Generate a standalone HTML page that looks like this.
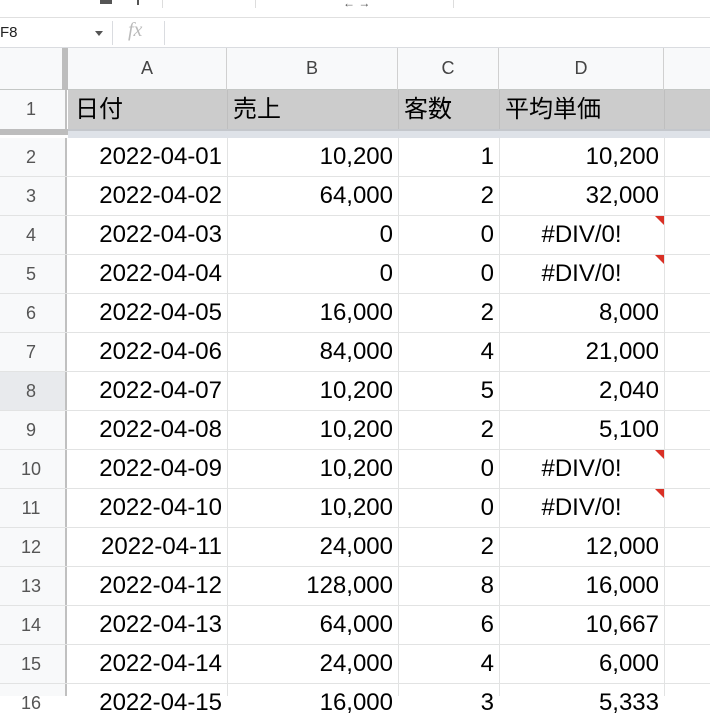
<!DOCTYPE html>
<html><head><meta charset="utf-8"><style>
*{margin:0;padding:0;box-sizing:border-box}
body{width:710px;height:696px;overflow:hidden;background:#fff;font-family:"Liberation Sans","Noto Sans CJK JP",sans-serif;position:relative}
.a{position:absolute}
.hl{position:absolute;background:#e2e3e3}
.c{position:absolute;height:39px;line-height:38px;font-size:24px;color:#000;white-space:nowrap}
.r{text-align:right;padding-right:5px}
.rh{position:absolute;left:0;width:62px;height:39px;line-height:38px;text-align:center;font-size:18px;color:#555}
.ch{position:absolute;top:48px;height:42px;line-height:40px;text-align:center;font-size:18px;color:#444;border-right:1px solid #d0d0d0}
.tri{position:absolute;width:0;height:0;border-top:9px solid #d93025;border-left:9px solid transparent}
</style></head><body>
<div class="a" style="left:0;top:0;width:710px;height:18px;background:#fff;border-bottom:1px solid #e0e0e0"></div>
<div class="a" style="left:100px;top:0;width:12px;height:4px;background:#555"></div>
<div class="a" style="left:137px;top:0;width:2px;height:5px;background:#555"></div>
<div class="a" style="left:162px;top:0;width:1px;height:8px;background:#ddd"></div>
<div class="a" style="left:255px;top:0;width:1px;height:8px;background:#ddd"></div>
<div class="a" style="left:343px;top:-4px;font-size:12px;color:#555">← →</div>
<div class="a" style="left:453px;top:0;width:1px;height:8px;background:#ddd"></div>
<div class="a" style="left:0;top:19px;width:710px;height:29px;border-bottom:1px solid #dadce0"></div>
<div class="a" style="left:0;top:24px;font-size:15px;color:#222">F8</div>
<div class="a" style="left:95px;top:31px;border-top:5px solid #555;border-left:4px solid transparent;border-right:4px solid transparent"></div>
<div class="a" style="left:112px;top:21px;width:1px;height:24px;background:#dadce0"></div>
<div class="a" style="left:128px;top:19px;font-size:20px;font-style:italic;color:#bbb;font-family:'Liberation Serif',serif">fx</div>
<div class="a" style="left:164px;top:21px;width:1px;height:24px;background:#dadce0"></div>
<div class="a" style="left:0;top:48px;width:710px;height:42px;background:#f8f9fa;border-bottom:1px solid #c4c7c5"></div>
<div class="a" style="left:62px;top:48px;width:6px;height:42px;background:#bdbdbd"></div>
<div class="ch" style="left:68px;width:159px">A</div>
<div class="ch" style="left:227px;width:171px">B</div>
<div class="ch" style="left:398px;width:101px">C</div>
<div class="ch" style="left:499px;width:165px">D</div>
<div class="a" style="left:0;top:90px;width:67px;height:39px;background:#f8f9fa;border-right:2px solid #c0c0c0"></div>
<div class="rh" style="top:90px">1</div>
<div class="a" style="left:68px;top:90px;width:642px;height:39px;background:#cccccc"></div>
<div class="a" style="left:227px;top:90px;width:1px;height:39px;background:#bfbfbf"></div>
<div class="a" style="left:398px;top:90px;width:1px;height:39px;background:#bfbfbf"></div>
<div class="a" style="left:499px;top:90px;width:1px;height:39px;background:#bfbfbf"></div>
<div class="a" style="left:664px;top:90px;width:1px;height:39px;background:#bfbfbf"></div>
<div class="c" style="left:75px;top:91px">日付</div>
<div class="c" style="left:233px;top:91px">売上</div>
<div class="c" style="left:404px;top:91px">客数</div>
<div class="c" style="left:505px;top:91px">平均単価</div>
<div class="a" style="left:0;top:129px;width:68px;height:6px;background:#bdbdbd"></div>
<div class="a" style="left:68px;top:129px;width:642px;height:9px;background:#dee2e8;border-top:2px solid #c4c7cc"></div>
<div class="a" style="left:0;top:138px;width:67px;height:558px;background:#f8f9fa;border-right:2px solid #c0c0c0"></div>
<div class="a" style="left:0;top:372px;width:67px;height:39px;background:#e8eaed;border-right:2px solid #c0c0c0"></div>
<div class="a" style="left:227px;top:138px;width:1px;height:558px;background:#e2e3e3"></div>
<div class="a" style="left:398px;top:138px;width:1px;height:558px;background:#e2e3e3"></div>
<div class="a" style="left:499px;top:138px;width:1px;height:558px;background:#e2e3e3"></div>
<div class="a" style="left:664px;top:138px;width:1px;height:558px;background:#e2e3e3"></div>
<div class="hl" style="left:0;top:176px;width:710px;height:1px"></div>
<div class="hl" style="left:0;top:215px;width:710px;height:1px"></div>
<div class="hl" style="left:0;top:254px;width:710px;height:1px"></div>
<div class="hl" style="left:0;top:293px;width:710px;height:1px"></div>
<div class="hl" style="left:0;top:332px;width:710px;height:1px"></div>
<div class="hl" style="left:0;top:371px;width:710px;height:1px"></div>
<div class="hl" style="left:0;top:410px;width:710px;height:1px"></div>
<div class="hl" style="left:0;top:449px;width:710px;height:1px"></div>
<div class="hl" style="left:0;top:488px;width:710px;height:1px"></div>
<div class="hl" style="left:0;top:527px;width:710px;height:1px"></div>
<div class="hl" style="left:0;top:566px;width:710px;height:1px"></div>
<div class="hl" style="left:0;top:605px;width:710px;height:1px"></div>
<div class="hl" style="left:0;top:644px;width:710px;height:1px"></div>
<div class="hl" style="left:0;top:683px;width:710px;height:1px"></div>

<div class="rh" style="top:138px">2</div><div class="c r" style="left:68px;width:159px;top:138px">2022-04-01</div><div class="c r" style="left:227px;width:171px;top:138px">10,200</div><div class="c r" style="left:398px;width:101px;top:138px">1</div><div class="c r" style="left:499px;width:165px;top:138px">10,200</div>
<div class="rh" style="top:177px">3</div><div class="c r" style="left:68px;width:159px;top:177px">2022-04-02</div><div class="c r" style="left:227px;width:171px;top:177px">64,000</div><div class="c r" style="left:398px;width:101px;top:177px">2</div><div class="c r" style="left:499px;width:165px;top:177px">32,000</div>
<div class="rh" style="top:216px">4</div><div class="c r" style="left:68px;width:159px;top:216px">2022-04-03</div><div class="c r" style="left:227px;width:171px;top:216px">0</div><div class="c r" style="left:398px;width:101px;top:216px">0</div><div class="c" style="left:499px;width:165px;top:216px;text-align:center">#DIV/0!</div><div class="tri" style="left:655px;top:216px"></div>
<div class="rh" style="top:255px">5</div><div class="c r" style="left:68px;width:159px;top:255px">2022-04-04</div><div class="c r" style="left:227px;width:171px;top:255px">0</div><div class="c r" style="left:398px;width:101px;top:255px">0</div><div class="c" style="left:499px;width:165px;top:255px;text-align:center">#DIV/0!</div><div class="tri" style="left:655px;top:255px"></div>
<div class="rh" style="top:294px">6</div><div class="c r" style="left:68px;width:159px;top:294px">2022-04-05</div><div class="c r" style="left:227px;width:171px;top:294px">16,000</div><div class="c r" style="left:398px;width:101px;top:294px">2</div><div class="c r" style="left:499px;width:165px;top:294px">8,000</div>
<div class="rh" style="top:333px">7</div><div class="c r" style="left:68px;width:159px;top:333px">2022-04-06</div><div class="c r" style="left:227px;width:171px;top:333px">84,000</div><div class="c r" style="left:398px;width:101px;top:333px">4</div><div class="c r" style="left:499px;width:165px;top:333px">21,000</div>
<div class="rh" style="top:372px">8</div><div class="c r" style="left:68px;width:159px;top:372px">2022-04-07</div><div class="c r" style="left:227px;width:171px;top:372px">10,200</div><div class="c r" style="left:398px;width:101px;top:372px">5</div><div class="c r" style="left:499px;width:165px;top:372px">2,040</div>
<div class="rh" style="top:411px">9</div><div class="c r" style="left:68px;width:159px;top:411px">2022-04-08</div><div class="c r" style="left:227px;width:171px;top:411px">10,200</div><div class="c r" style="left:398px;width:101px;top:411px">2</div><div class="c r" style="left:499px;width:165px;top:411px">5,100</div>
<div class="rh" style="top:450px">10</div><div class="c r" style="left:68px;width:159px;top:450px">2022-04-09</div><div class="c r" style="left:227px;width:171px;top:450px">10,200</div><div class="c r" style="left:398px;width:101px;top:450px">0</div><div class="c" style="left:499px;width:165px;top:450px;text-align:center">#DIV/0!</div><div class="tri" style="left:655px;top:450px"></div>
<div class="rh" style="top:489px">11</div><div class="c r" style="left:68px;width:159px;top:489px">2022-04-10</div><div class="c r" style="left:227px;width:171px;top:489px">10,200</div><div class="c r" style="left:398px;width:101px;top:489px">0</div><div class="c" style="left:499px;width:165px;top:489px;text-align:center">#DIV/0!</div><div class="tri" style="left:655px;top:489px"></div>
<div class="rh" style="top:528px">12</div><div class="c r" style="left:68px;width:159px;top:528px">2022-04-11</div><div class="c r" style="left:227px;width:171px;top:528px">24,000</div><div class="c r" style="left:398px;width:101px;top:528px">2</div><div class="c r" style="left:499px;width:165px;top:528px">12,000</div>
<div class="rh" style="top:567px">13</div><div class="c r" style="left:68px;width:159px;top:567px">2022-04-12</div><div class="c r" style="left:227px;width:171px;top:567px">128,000</div><div class="c r" style="left:398px;width:101px;top:567px">8</div><div class="c r" style="left:499px;width:165px;top:567px">16,000</div>
<div class="rh" style="top:606px">14</div><div class="c r" style="left:68px;width:159px;top:606px">2022-04-13</div><div class="c r" style="left:227px;width:171px;top:606px">64,000</div><div class="c r" style="left:398px;width:101px;top:606px">6</div><div class="c r" style="left:499px;width:165px;top:606px">10,667</div>
<div class="rh" style="top:645px">15</div><div class="c r" style="left:68px;width:159px;top:645px">2022-04-14</div><div class="c r" style="left:227px;width:171px;top:645px">24,000</div><div class="c r" style="left:398px;width:101px;top:645px">4</div><div class="c r" style="left:499px;width:165px;top:645px">6,000</div>
<div class="rh" style="top:684px">16</div><div class="c r" style="left:68px;width:159px;top:684px">2022-04-15</div><div class="c r" style="left:227px;width:171px;top:684px">16,000</div><div class="c r" style="left:398px;width:101px;top:684px">3</div><div class="c r" style="left:499px;width:165px;top:684px">5,333</div>
</body></html>
